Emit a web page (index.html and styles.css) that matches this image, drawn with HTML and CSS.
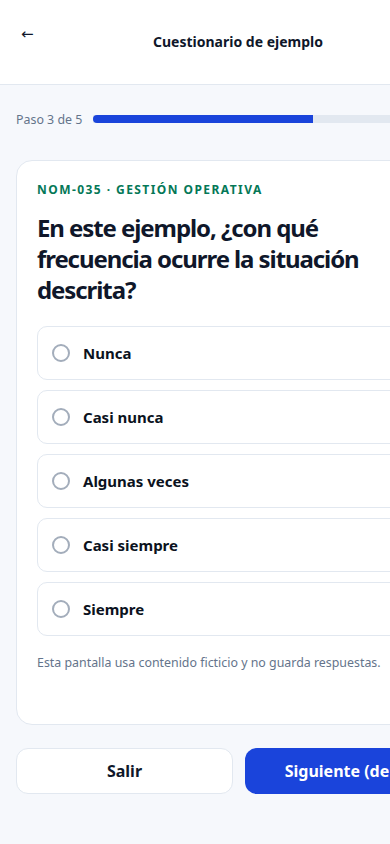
FILE: index.html
```html
<!DOCTYPE html>
<html lang="es">
<head>
    <meta charset="UTF-8">
    <meta name="viewport" content="width=device-width, initial-scale=1.0">
    <title>Cuestionario de ejemplo</title>
    <link rel="stylesheet" href="styles.css">
</head>
<body>
    <div class="app">
        <header class="topbar">
            <button class="back" aria-label="Volver">&larr;</button>
            <h1 class="title">Cuestionario de ejemplo</h1>
            <span class="spacer"></span>
        </header>
        <main class="content">
            <div class="progress-row">
                <span class="progress-label">Paso 3 de 5</span>
                <div class="track"><div class="fill" style="width: 60%"></div></div>
            </div>
            <section class="card">
                <p class="category">NOM-035 · Gestión operativa</p>
                <h2 class="question">En este ejemplo, ¿con qué frecuencia ocurre la situación descrita?</h2>
                <div class="options">
                    <label class="option"><input type="radio" name="freq"><span class="radio"></span><span>Nunca</span></label>
                    <label class="option"><input type="radio" name="freq"><span class="radio"></span><span>Casi nunca</span></label>
                    <label class="option"><input type="radio" name="freq"><span class="radio"></span><span>Algunas veces</span></label>
                    <label class="option"><input type="radio" name="freq"><span class="radio"></span><span>Casi siempre</span></label>
                    <label class="option"><input type="radio" name="freq"><span class="radio"></span><span>Siempre</span></label>
                </div>
                <p class="note">Esta pantalla usa contenido ficticio y no guarda respuestas.</p>
            </section>
            <div class="actions">
                <button class="btn btn-ghost">Salir</button>
                <button class="btn btn-primary">Siguiente (demo)</button>
            </div>
        </main>
    </div>
</body>
</html>
```

FILE: styles.css
```css
* {
    box-sizing: border-box;
}
body {
    margin: 0;
    font-family: "Noto Sans", "Open Sans", sans-serif;
    background-color: #f6f8fc;
    color: #0f172a;
}
.app {
    width: 476px;
}
.topbar {
    display: flex;
    align-items: flex-start;
    height: 85px;
    padding: 25px 16px 0;
    background-color: #ffffff;
    border-bottom: 1px solid #e2e8f0;
}
.back {
    width: 40px;
    padding: 0 0 0 5px;
    border: none;
    background: none;
    font-family: "DejaVu Sans", sans-serif;
    font-size: 15px;
    line-height: 18px;
    color: #0f172a;
    text-align: left;
    cursor: pointer;
}
.title {
    flex: 1;
    margin: 7px 0 0;
    font-size: 14px;
    line-height: 20px;
    font-weight: 700;
    text-align: center;
}
.spacer {
    width: 40px;
}
.content {
    padding: 24px 16px 40px;
}
.progress-row {
    display: flex;
    align-items: center;
    gap: 11px;
    height: 20px;
    margin-bottom: 31px;
}
.progress-label {
    font-size: 12.4px;
    color: #64748b;
}
.track {
    flex: 1;
    height: 8px;
    background-color: #e2e8f0;
    border-radius: 0 4px 4px 0;
}
.fill {
    height: 100%;
    background-color: #1a44db;
    border-radius: 4px 0 0 4px;
}
.card {
    background-color: #ffffff;
    border: 1px solid #e2e8f0;
    border-radius: 16px;
    padding: 20px 20px 52px;
}
.category {
    margin: 0;
    font-size: 12px;
    line-height: 18px;
    font-weight: 700;
    letter-spacing: 0.12em;
    text-transform: uppercase;
    color: #047857;
}
.question {
    max-width: 340px;
    margin: 13px 0 21px;
    font-size: 24px;
    line-height: 31px;
    font-weight: 700;
    letter-spacing: -0.045em;
    color: #0f172a;
}
.options {
    display: flex;
    flex-direction: column;
    gap: 10px;
}
.option {
    display: flex;
    align-items: center;
    gap: 13px;
    height: 54px;
    padding: 0 14px;
    border: 1px solid #e2e8f0;
    border-radius: 10px;
    font-size: 15px;
    font-weight: 700;
    color: #0b1220;
    cursor: pointer;
}
.option input {
    display: none;
}
.radio {
    width: 18px;
    height: 18px;
    border: 2px solid #a3adbb;
    border-radius: 50%;
}
.option input:checked + .radio {
    border: 5px solid #1a44db;
}
.note {
    margin: 18px 0 0;
    font-size: 12.4px;
    line-height: 18px;
    color: #64748b;
}
.actions {
    display: flex;
    gap: 12px;
    margin-top: 23px;
}
.btn {
    flex: 1;
    height: 46px;
    border-radius: 12px;
    font-family: inherit;
    font-size: 16px;
    font-weight: 700;
    cursor: pointer;
}
.btn-ghost {
    background-color: #ffffff;
    border: 1px solid #e2e8f0;
    color: #0f172a;
}
.btn-primary {
    background-color: #1a44db;
    border: none;
    color: #ffffff;
}
```
